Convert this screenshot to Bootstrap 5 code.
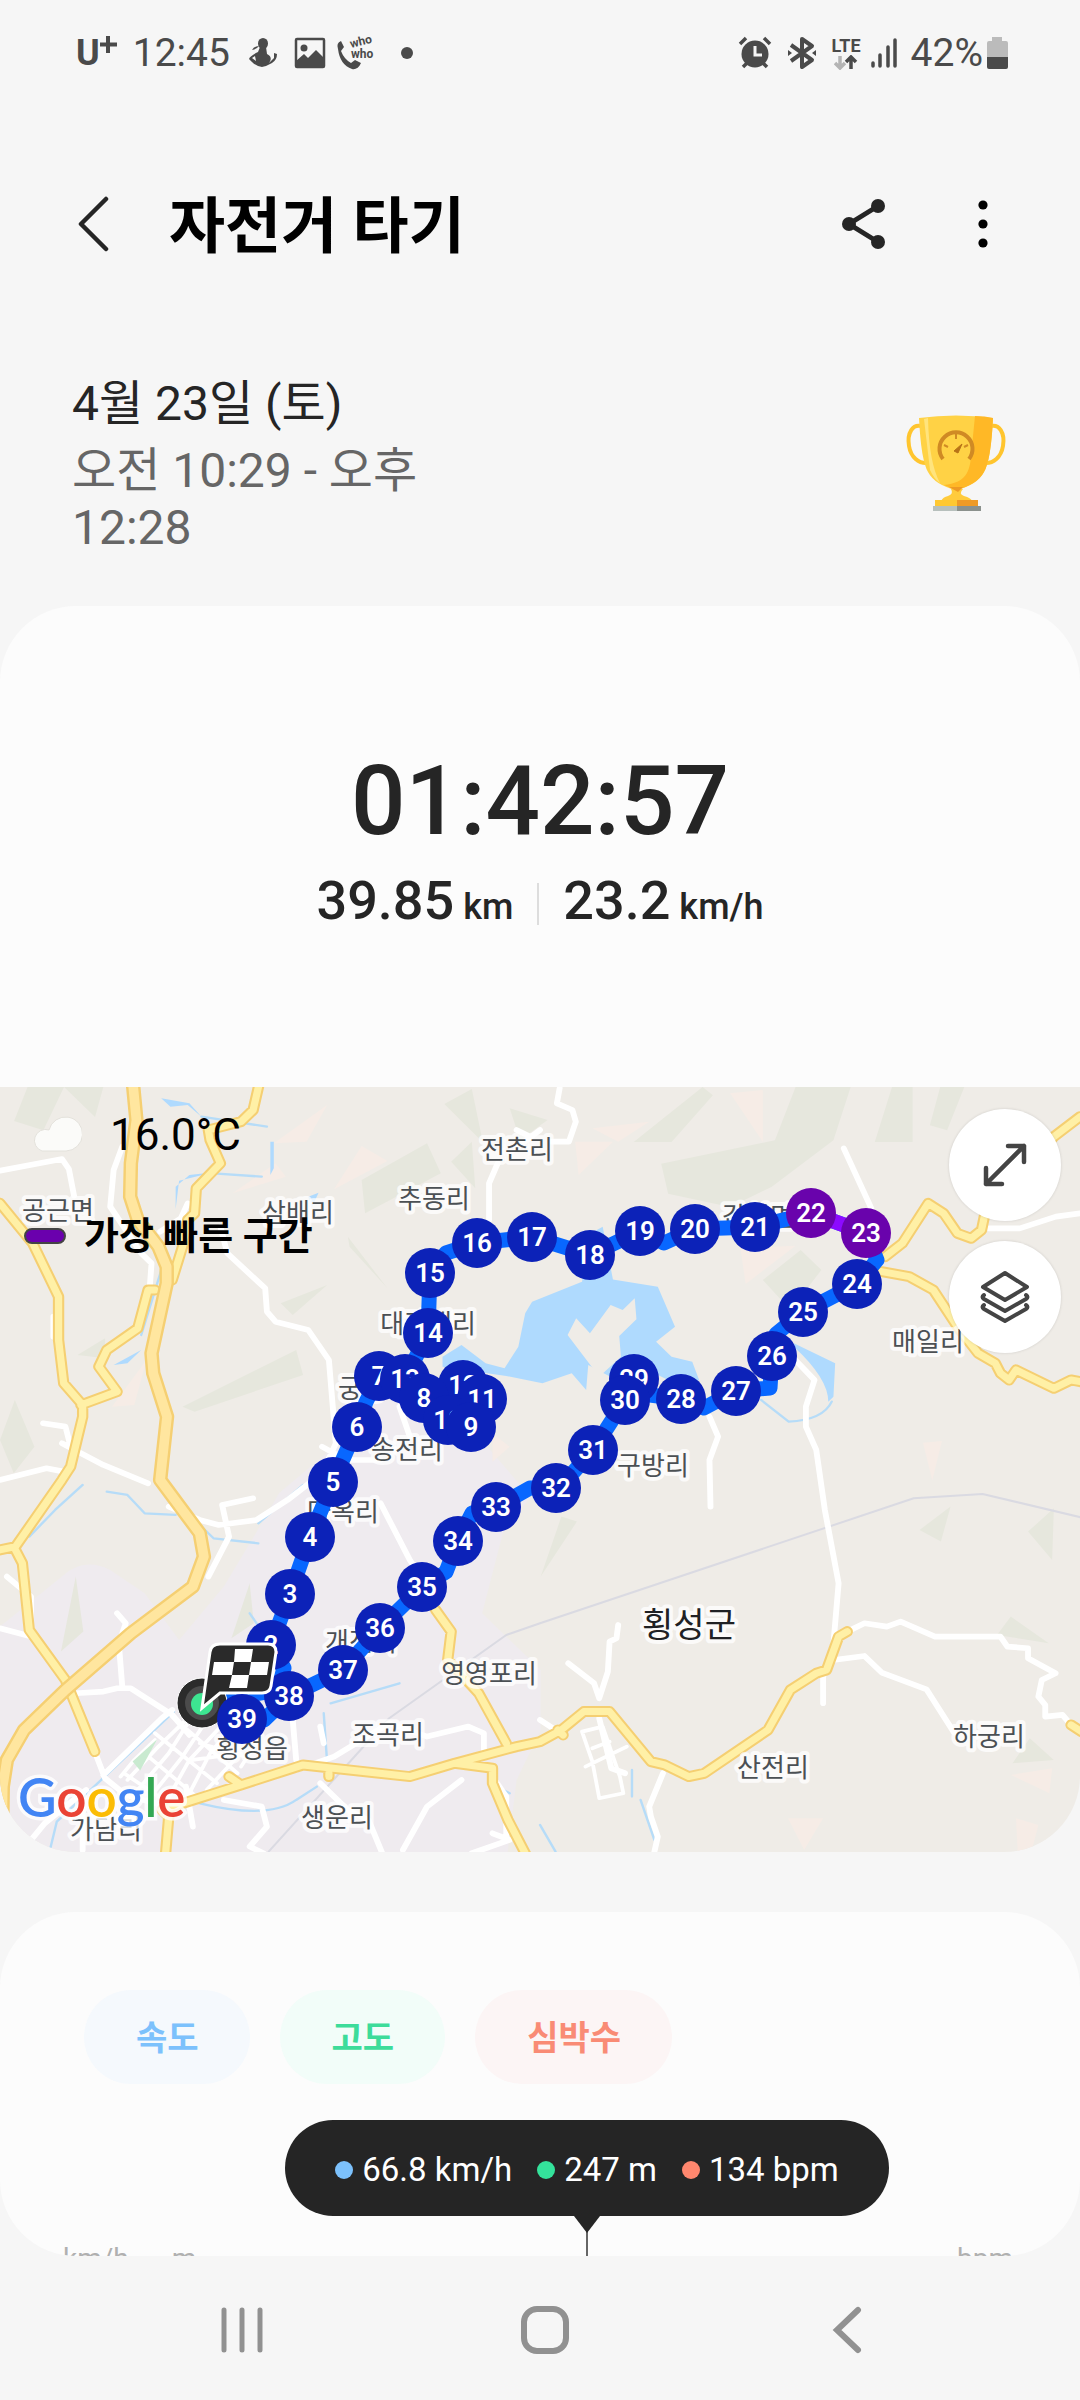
<!DOCTYPE html>
<html lang="ko">
<head>
<meta charset="utf-8">
<meta name="viewport" content="width=device-width, initial-scale=1">
<title>자전거 타기</title>
<link href="https://cdn.jsdelivr.net/npm/bootstrap@5.3.0/dist/css/bootstrap.min.css" rel="stylesheet">
<style>
body{background:#f6f6f6;color:#252525;font-family:Roboto,"Noto Sans CJK KR",sans-serif}
svg{display:block;flex:none}
.status-bar{height:104px;padding:2px 72px 0 76px;color:#4a4a4a;font-size:39px;line-height:48px}
.carrier{font-size:36px;line-height:36px}
.lte{font-size:18px;line-height:18px}
.app-bar{height:240px;padding:0 75px}
.app-title{font-size:61px;line-height:72px;color:#000;padding:6px 0 0 60px;font-weight:600}
.plain-btn{background:none;border:0;padding:0;color:#252525}
.when{padding:30px 72px 0;height:262px}
.when-text{width:400px;font-size:48px;line-height:57px}
.when-date{line-height:60px;margin-bottom:8px}
.muted-time{color:#666}
.trophy{margin-top:40px}
.panel{background:#fcfcfc}
.summary{border-radius:76px 76px 0 0;height:481px;padding-top:139px;font-weight:500}
.duration{font-size:96px;line-height:112px}
.stat-row{margin-top:12px}
.stat-num{font-size:54px;line-height:64px}
.stat-unit{font-size:36px;white-space:pre}
.stat-rule{width:2px;height:42px;background:#ddd}
.route-map{border-radius:0 0 76px 76px;overflow:hidden;background:#efece7}
.map-name{font-size:26px;fill:#4b5054;text-anchor:middle;stroke:#fff;stroke-opacity:.75;stroke-width:8px;stroke-linejoin:round;paint-order:stroke}
.map-city{font-size:34px;fill:#202124}
.pins text{font-size:26px;font-weight:600;fill:#fff;text-anchor:middle}
.logo-text{font-family:Lato,sans-serif;font-size:53px;font-weight:600;stroke:#fff;stroke-opacity:.8;stroke-width:7px;paint-order:stroke}
.map-legend{top:20px;left:24px;color:#000}
.temp{font-size:44px;line-height:56px}
.fastest{font-size:38px;line-height:48px;margin-top:49px;gap:18px;font-weight:600}
.swatch{width:42px;height:16px;border-radius:8px;border:2px solid #444;background:#6a00ad}
.map-tools{top:22px;right:19px;gap:20px}
.round-btn{width:112px;height:112px;border:0;border-radius:50%;background:#fff;color:#444;box-shadow:0 0 3px #0002}
.chart-card{border-radius:76px 76px 0 0;margin-top:60px;padding-top:78px;height:460px}
.chips{padding-left:84px;gap:30px}
.chip{height:94px;padding:2px 51px 0 52px;border:0;border-radius:47px;font-size:34px;font-weight:600}
.chip-speed{color:#7cc1fc;background:#f5f9fd}
.chip-alt{color:#3ddc9a;background:#f2fdf9}
.chip-heart{color:#f98b75;background:#fcf5f5}
.chart-tip{width:604px;height:96px;margin:36px auto 0 285px;padding-top:3px;border-radius:48px;background:#252525;color:#fff;font-size:33px;line-height:40px;gap:25px}
.chart-tip i{width:18px;height:18px;border-radius:50%;margin-right:9px}
.dot-speed{background:#7cc1fc}.dot-alt{background:#34e29b}.dot-heart{background:#ff876e}
.cursor-line{margin-left:574px}
.axis-row{font-size:28px;line-height:34px;color:#b0b0b0;margin-top:-18px;padding:0 67px 0 63px;gap:43px}
.scroll-area{min-height:0;border-radius:0 0 76px 76px}
.sys-nav{height:144px;color:#919191;padding:4px 208px 0 217px}
</style>
<script src="https://cdn.jsdelivr.net/npm/bootstrap@5.3.0/dist/js/bootstrap.bundle.min.js"></script>
</head>
<body class="vh-100 d-flex flex-column overflow-hidden">
<main class="scroll-area flex-grow-1 overflow-hidden">
  <div class="status-bar d-flex align-items-center justify-content-between">
    <div class="d-flex align-items-center">
      <span class="carrier fw-bold">U</span>
      <svg width="17" height="34" viewBox="0 0 17 34"><path d="M8 0v17M0 8.500h17" stroke="#4a4a4a" stroke-width="4"/></svg>
      <span class="ms-3">12:45</span>
      <svg class="ms-3" width="32" height="32" viewBox="0 0 32 32" fill="#4a4a4a"><ellipse cx="17" cy="6.500" rx="5" ry="5.500"/><path d="M14 10h6l1 7c4 2 5 5 2 9l5-5v-5l3 1q0 6-5 9t-10 4q-6-1-10-5l-3-3q1-3 9-7zM9 19l-3 2 4 3z" fill-rule="evenodd"/><path d="M6 13q2-4 7-4-2 3-7 4z"/></svg>
      <svg class="ms-3" width="32" height="32" viewBox="0 0 32 32"><rect x="2" y="2" width="28" height="28" rx="1" fill="none" stroke="#4a4a4a" stroke-width="2.500"/><circle cx="10" cy="11" r="3.500" fill="#4a4a4a"/><path d="M2 24l8-7 4 4 8-8 8 8v9H2z" fill="#4a4a4a"/></svg>
      <svg class="ms-2" width="42" height="34" viewBox="0 0 42 34" fill="#4a4a4a"><path d="M7 5l3 6-3 4q3 8 10 12l4-3 6 3c-2 5-6 7-9 6Q6 29 4 13 2 7 7 5z"/><g font-size="12" font-weight="700"><text x="17" y="12" transform="rotate(-14 17 12)">who</text><text x="17" y="22">who</text></g></svg>
      <svg class="ms-3" width="26" height="14" viewBox="0 0 26 14"><circle cx="15" cy="7" r="6" fill="#4a4a4a"/></svg>
    </div>
    <div class="d-flex align-items-center">
      <svg width="34" height="34" viewBox="0 0 34 34" stroke="#4a4a4a"><path d="M2 8l6-6M32 8l-6-6M5 31l4-4M29 31l-4-4" stroke-width="3.500"/><circle cx="17" cy="18" r="13.500" fill="#4a4a4a" stroke="none"/><path d="M17 10v9h7" fill="none" stroke="#f6f6f6" stroke-width="3"/></svg>
      <svg class="ms-3" width="28" height="34" viewBox="0 0 28 34"><path d="M3 9l21 15-10 7V3l10 7L3 25" fill="none" stroke="#4a4a4a" stroke-width="4" stroke-linejoin="round"/><path d="M0 14l4 3-4 3zM28 14l-4 3 4 3z" fill="#4a4a4a"/></svg>
      <div class="d-flex flex-column align-items-center ms-3"><span class="lte fw-bold">LTE</span><svg width="24" height="15" viewBox="0 0 24 15" fill="none" stroke-width="3.500"><path d="M6 1v11M1 8l5 5 5-5" stroke="#b4b4b4"/><path d="M17 14V3M12 7l5-5 5 5" stroke="#4a4a4a"/></svg></div>
      <svg class="ms-2" width="30" height="32" viewBox="0 0 30 32" stroke="#4a4a4a" stroke-width="3.500" stroke-linecap="round"><path d="M4 26v3M11 18v11M19 10v19M26 3v26"/></svg>
      <span class="ms-2 ps-1">42%</span>
      <svg class="ms-1" width="21" height="32" viewBox="0 0 21 32"><path d="M5 0h10v4h4q2 0 2 2v14H0V6q0-2 2-2h3z" fill="#bbb"/><path d="M0 20h21v10q0 2-2 2H2q-2 0-2-2z" fill="#4a4a4a"/></svg>
    </div>
  </div>

  <header class="app-bar d-flex align-items-center">
    <a href="#" class="plain-btn" aria-label="뒤로"><svg width="34" height="56" viewBox="0 0 34 56"><path d="M31 3L6 28l25 25" fill="none" stroke="#252525" stroke-width="4.500" stroke-linecap="round" stroke-linejoin="round"/></svg></a>
    <h1 class="app-title mb-0 me-auto">자전거 타기</h1>
    <button class="plain-btn me-5" type="button" aria-label="공유"><svg width="52" height="56" viewBox="0 0 52 56" fill="#252525"><path d="M41 10L12 28l29 18" fill="none" stroke="#252525" stroke-width="5"/><circle cx="41" cy="10" r="7"/><circle cx="12" cy="28" r="7"/><circle cx="41" cy="46" r="7"/></svg></button>
    <button class="plain-btn ms-4" type="button" aria-label="더보기"><svg width="44" height="56" viewBox="0 0 44 56"><g fill="#000"><circle cx="22" cy="9" r="4.600"/><circle cx="22" cy="28" r="4.600"/><circle cx="22" cy="47" r="4.600"/></g></svg></button>
  </header>

  <section class="when d-flex justify-content-between align-items-start">
    <div class="when-text">
      <div class="when-date">4월 23일 (토)</div>
      <div class="muted-time">오전 10:29 - 오후 12:28</div>
    </div>
    <svg class="trophy" width="104" height="98" viewBox="0 0 104 98">
      <path d="M20 13C8 8 3 20 5 32s10 17 17 17M84 13c12-5 17 7 15 19S89 49 82 49" fill="none" stroke="#ffc52e" stroke-width="4"/>
      <path d="M15 4q37-5 74 0-2 42-9 54-7 13-28 18-21-5-28-18Q17 46 15 4z" fill="#ffd245"/>
      <path d="M71 2q10 0 18 2-2 42-9 54-7 13-28 18l-12-5c22-2 26-14 27-29z" fill="#ffb826"/>
      <path d="M20 5l6 51q4 9 10 13-11-20-12-65z" fill="#ffe47d"/>
      <path d="M39 45a16.500 16.500 0 1 1 26 0" fill="none" stroke="#d08a24" stroke-width="4"/>
      <path d="M52 20v5M40 31l4 2M64 31l-4 2" stroke="#d08a24" stroke-width="2"/><path d="M58 30l-4 9-4-2z" fill="#b87317" stroke="#b87317" stroke-width="1"/>
      <path d="M47 75h12q-5 5 1 7 7 2 8 5H37q2-4 7-5 6-2 3-7z" fill="#ffcb3c"/><path d="M45 73h14l-5 5z" fill="#ee9a24"/>
      <path d="M31 86h22v6H31z" fill="#ffc832"/><path d="M53 86h21v6H53z" fill="#ef9a26"/>
      <path d="M29 92h24v5H29z" fill="#b7c0bd"/><path d="M53 92h24v5H53z" fill="#8b918d"/>
    </svg>
  </section>

  <section class="panel summary text-center">
    <div class="duration">01:42:57</div>
    <div class="stat-row d-flex justify-content-center align-items-center">
      <div class="stat-num">39.85<span class="stat-unit"> km</span></div>
      <div class="stat-rule mx-4"></div>
      <div class="stat-num">23.2<span class="stat-unit"> km/h</span></div>
    </div>
  </section>

  <section class="route-map position-relative">
    <svg class="w-100 h-auto" viewBox="0 1087 1080 765" role="img" aria-label="경로 지도">
      <g transform="translate(0 1080) scale(.3444 .3333)" fill="none" stroke-linejoin="round" stroke-linecap="round">
        <!-- built-up area -->
        <path fill="#efebef" d="M0 2400V1640l180-150q60-60 140-20l100 70 100 140 130-160 110-190 50-90 160-140 40-200 60-80 130 60 60 130 130 60 150 180-80 110-60 240 170 170v180l-70 150-60 500z"/>
        <!-- woodland -->
        <g fill="#e6e7dd"><path d="M80 21h220l-24 90-90-90-60 130-85-28zM1290 72l80-45 32 160zM1480 85l110 35-80 60zM1050 300l190-110 40 90-220 120zM1310 245l60-60 10 140zM1010 470l115 155-110-125zM815 670l135-55-100 90zM530 980l330-170 20 75-315 110zM225 825l80-50v60zM0 1080l43-120 57 140-60 80zM2040 21l30 25-120 140h-110zM2310 21h160l-50 160-180 140-120 60-180-40-20-90 330-70zM2590 21h60v165h-110zM2730 21h70l-50 130-50-15zM2215 600l110-90 60 60-90 120zM2670 1350l90-70-28 105zM2985 1355l75-70-5 155zM2895 1665l40-55 110 80zM2940 2050l50-75 70 65zM1630 1310l45 15-105 165zM220 1490l22 165-65 60zM725 1510l12 120-65 45z"/></g>
        <g fill="#f6ece6"><path d="M950 75l-60 110-95 5zM1050 198l75 45-155 85zM800 250l30 40-155 50zM1670 185h110l-100 100zM1720 145l165-20-90 60zM2120 40l95-10v155zM2150 505l160-8-145 115zM2680 1088l55-5-28 118zM2935 2085l120-20-8 75zM2288 2215h102l-55 95zM2950 2215l65 20-20 80h-40zM325 980l100-140-35 135zM1430 1060l50 40-50 45z"/></g>
        <!-- water -->
        <g fill="#afdafe"><path d="M1285 860v-30l55-35 70 55 55 15 40-65 20-100 20-35 145-60 25-145 15 130 180 30 50 120-55 45 45 45 60 15 20 55-50 20-80-40-110 20-82-45-6 75-42-50-85 30-105-22z"/><path d="M1680 480l70-40 30 160-50 20zM2305 790l120 60-5 100-15 15q0-70-100-165zM468 55l82 15 35 40-40-35-50 5zM510 320l40-35 70-8-100 25-10 85zM785 185h10v80l-10 20zM330 855l80-45-40 40zM895 350l30-12-20 45z"/></g>
        <path fill="#efece7" d="M1673 715l40 45 60-85 35 15 35-35 5 63-50 50 5 62-63 60-92-125z"/>
        <g stroke="#b6dcf8" stroke-width="7"><path d="M2210 960l80 65q100-5 125-60M585 110l190 30M620 280l140 10M310 1235l60 10 50 55 90 5M880 1215l-130 115M590 1345l30 30 130 15M240 1215l-80 75-75 80M470 565l-60 200M725 1600l40 60M505 1895l-340 330-20 85M1160 1810l-200 60M940 1900l10 150M580 2170q200 50 280-10l60-40M1440 2060v60l40 20M1568 2235l45 80M1835 2070v80M1860 2160l40 120"/></g>
        <g stroke="#dadae2" stroke-width="6"><path d="M780 2315l350-400 340-250 98-35 1085-375 200-13 285 70"/></g>
        <!-- local roads -->
        <g stroke="#fff" stroke-width="17"><path d="M0 272l180-35 20 30 15 80M355 200l-25 70-10 110 90 140 30 30-5 70M415 30M545 370l-20 45-60 40M640 440l20 80 110 105 5 70 25 30 95 25 60 90 20 250-40 90-100 80-90 60-110 15-55-15-90-40M935 1100l70 40h100M125 1030l65 10 15 60-25-10 120 65 130 55M0 1200l135-35 50 10M645 1275l20 95-60 120M645 1275l90-20M1105 1270l85 170 50 80M1445 250l-25 60v110M1568 150l-90 70M1625 25l-8 45 45 20 10 35-20 60h-50M1500 150l40 20M2450 205l80 180M3136 400l-70 10-105 35h-90M2300 830l65 70-25 80v60l30 70 25 180 40 220-15 180-30 100v80M2060 1010l25 60-25 70 3 140M2420 1740l90-12 50 50 130 50 80 130M2460 1655l50-25 65 10 40-15 100 45h190l20 30 60 5v30l80 45-40 20-10 50 20 25v35l50-5 25 30M1795 1635l-5 40-20 10-5 90-25 80-15-45-75-60M1740 1915l35 150 40 15M1925 2080l-40 100 5 30 20 60-10 46M0 1645l110 30M340 1600l25 30-20 60 10 130M220 1840l80-5 40-10h40l120 80 50 60M275 2015l30 80 60 50 140 40M20 1490l70 60v60M300 2085l90-90 80-80 30-25M250 2130l-120 100-40 50M240 2180v130M540 2120l20 120M650 2160l110 20 15 60-50 60 40 20M850 1920l10 120M930 1940l10 50M860 2070l110-40 160-100 110 40 120-30 45 20v50M930 2110l80 80 60 30 40 100M1340 2100l-100 80-70 130M1430 2260l50 20-110 40M1430 2090l40 60v120M1568 1920l60 40M1160 980l30 90M155 710v60"/></g>
        <path stroke="#fff" stroke-width="11" d="M370 2100l90-100 90-90M400 2130l90-110 80-130M430 2160l100-130 90-140M480 2170l70-130 100-110M360 2080l130 90M420 2020l150 130M450 1960l180 150M500 1910l190 170M540 2160l70-140 50-60M600 2130l90-100M560 2040l140-20M580 1990l130 40M700 2060l50-80M350 2090l40-50 60-60M1690 1955l60-15 50 150 10 50-70 15-20-110-30-90M1700 2060l120-60M1720 2005l50-20"/>
        <path stroke="none" fill="#c9ead0" d="M385 2045l72-68-50 95z"/>
        <!-- main roads -->
        <path stroke="#f5cf72" stroke-width="33" d="M755 0l-20 90-35 35-95 25 5 30 30 70-70 75-5 75-20 20-15 80-30 100M450 630h-20l-30 115-90 65-23 50 53 75-105 40M0 370l95 120 75 160v130l15 130 55 65v35l-35 150-25 40L45 1400l-45 10M45 1410l20 40 20 200 105 150 85 215M480 2330l10-120-20-20 230-75 180-60 310 35 130-40 180-50 68-15 62-35 65-55h75l120 150 40 10 70 35 45-10 185-130 65-120 75-50 30-10 35-100 25-15M1265 1590l45 65-10 85 90 100 80 150M1320 2050l110 15v45l45 110 60 120M2570 530l50-40 75-120 45 30 40 60 40 15 30-25 10-50 200-230 76-60M2560 575l80 15 70 40 70 110 60 80 50 30 15 30 25 20 20-30 110 55 50-25 26 5M3110 1935l30 20M665 2090l35 25M955 2080v10M1620 1950l15 15"/>
        <path stroke="#fff0a6" stroke-width="21" d="M755 0l-20 90-35 35-95 25 5 30 30 70-70 75-5 75-20 20-15 80-30 100M450 630h-20l-30 115-90 65-23 50 53 75-105 40M0 370l95 120 75 160v130l15 130 55 65v35l-35 150-25 40L45 1400l-45 10M45 1410l20 40 20 200 105 150 85 215M480 2330l10-120-20-20 230-75 180-60 310 35 130-40 180-50 68-15 62-35 65-55h75l120 150 40 10 70 35 45-10 185-130 65-120 75-50 30-10 35-100 25-15M1265 1590l45 65-10 85 90 100 80 150M1320 2050l110 15v45l45 110 60 120M2570 530l50-40 75-120 45 30 40 60 40 15 30-25 10-50 200-230 76-60M2560 575l80 15 70 40 70 110 60 80 50 30 15 30 25 20 20-30 110 55 50-25 26 5M3110 1935l30 20M665 2090l35 25M955 2080v10M1620 1950l15 15"/>
        <path stroke="#f5cf72" stroke-width="42" d="M385 0l11 120-16 130-2 100 22 70 60 80 24 60v50l-44 210 5 60 40 130-20 190 115 160 12 70-32 90-180 140-190 170-120 120-50 90-12 80-3 210"/>
        <path stroke="#ffe69f" stroke-width="28" d="M385 0l11 120-16 130-2 100 22 70 60 80 24 60v50l-44 210 5 60 40 130-20 190 115 160 12 70-32 90-180 140-190 170-120 120-50 90-12 80-3 210"/>
      </g>
      <g>
        <g class="map-name">
          <text x="58" y="1220">공근면</text><text x="517" y="1159">전촌리</text><text x="434" y="1208">추동리</text><text x="298" y="1222">삼배리</text>
          <text x="428" y="1333">대관대리</text><text x="374" y="1398">궁종리</text><text x="407" y="1459">송전리</text><text x="343" y="1521">마옥리</text>
          <text x="361" y="1651">개전리</text><text x="489" y="1683">영영포리</text><text x="388" y="1744">조곡리</text><text x="252" y="1758">횡성읍</text>
          <text x="337" y="1827">생운리</text><text x="106" y="1839">가담리</text><text x="758" y="1226">갑천면</text><text x="928" y="1351">매일리</text>
          <text x="653" y="1475">구방리</text><text x="773" y="1777">산전리</text><text x="989" y="1746">하궁리</text>
        </g>
        <text class="map-name map-city" x="689" y="1637">횡성군</text>
      </g>
      <g fill="none" stroke="#0867ff" stroke-width="15" stroke-linejoin="round" stroke-linecap="round">
        <path d="M202 1703L278 1690L284 1668L271 1645L290 1594L310 1537L333 1482L357 1427L366 1402L379 1376L424 1398L448 1420L471 1427L482 1399L463 1385L424 1398L405 1379L428 1333L430 1273L446 1253L477 1243L532 1237L590 1255L640 1231L664 1243L695 1229L755 1227L811 1213L866 1233L877 1260L857 1284L803 1312L776 1334L772 1356L770 1388L736 1391L704 1408L681 1399L650 1395L634 1379L625 1400L593 1450L570 1476L556 1488L530 1488L496 1507L472 1513L458 1541L446 1572L422 1587L380 1628L343 1670L289 1696L264 1720L242 1719"/>
        <path stroke="#8c0aff" d="M811 1213L866 1233"/>
      </g>
      <defs><circle id="km" r="25" fill="#0c22b8"/><circle id="fast" r="25" fill="#6903ac"/></defs>
      <g class="pins">
        <use href="#fast" x="811" y="1213"/><text x="811" y="1222">22</text>
        <use href="#km" x="755" y="1227"/><text x="755" y="1236">21</text>
        <use href="#km" x="695" y="1229"/><text x="695" y="1238">20</text>
        <use href="#km" x="640" y="1231"/><text x="640" y="1240">19</text>
        <use href="#fast" x="866" y="1233"/><text x="866" y="1242">23</text>
        <use href="#km" x="532" y="1237"/><text x="532" y="1246">17</text>
        <use href="#km" x="477" y="1243"/><text x="477" y="1252">16</text>
        <use href="#km" x="590" y="1255"/><text x="590" y="1264">18</text>
        <use href="#km" x="430" y="1273"/><text x="430" y="1282">15</text>
        <use href="#km" x="857" y="1284"/><text x="857" y="1293">24</text>
        <use href="#km" x="803" y="1312"/><text x="803" y="1321">25</text>
        <use href="#km" x="428" y="1333"/><text x="428" y="1342">14</text>
        <use href="#km" x="772" y="1356"/><text x="772" y="1365">26</text>
        <use href="#km" x="379" y="1376"/><text x="379" y="1385">7</text>
        <use href="#km" x="405" y="1379"/><text x="405" y="1388">13</text>
        <use href="#km" x="634" y="1379"/><text x="634" y="1388">29</text>
        <use href="#km" x="463" y="1385"/><text x="463" y="1394">12</text>
        <use href="#km" x="736" y="1391"/><text x="736" y="1400">27</text>
        <use href="#km" x="424" y="1398"/><text x="424" y="1407">8</text>
        <use href="#km" x="482" y="1399"/><text x="482" y="1408">11</text>
        <use href="#km" x="681" y="1399"/><text x="681" y="1408">28</text>
        <use href="#km" x="625" y="1400"/><text x="625" y="1409">30</text>
        <use href="#km" x="448" y="1420"/><text x="448" y="1429">10</text>
        <use href="#km" x="471" y="1427"/><text x="471" y="1436">9</text>
        <use href="#km" x="357" y="1427"/><text x="357" y="1436">6</text>
        <use href="#km" x="593" y="1450"/><text x="593" y="1459">31</text>
        <use href="#km" x="333" y="1482"/><text x="333" y="1491">5</text>
        <use href="#km" x="556" y="1488"/><text x="556" y="1497">32</text>
        <use href="#km" x="496" y="1507"/><text x="496" y="1516">33</text>
        <use href="#km" x="310" y="1537"/><text x="310" y="1546">4</text>
        <use href="#km" x="458" y="1541"/><text x="458" y="1550">34</text>
        <use href="#km" x="422" y="1587"/><text x="422" y="1596">35</text>
        <use href="#km" x="290" y="1594"/><text x="290" y="1603">3</text>
        <use href="#km" x="380" y="1628"/><text x="380" y="1637">36</text>
        <use href="#km" x="271" y="1645"/><text x="271" y="1654">2</text>
        <use href="#km" x="343" y="1670"/><text x="343" y="1679">37</text>
        <use href="#km" x="289" y="1696"/><text x="289" y="1705">38</text>
        <circle cx="202" cy="1703" r="25" fill="#2b2b2b" stroke="#fff" stroke-width="1"/><circle cx="202" cy="1703" r="17" fill="#4b4b4b"/><circle cx="202" cy="1704" r="11" fill="#3de591"/>
        <path d="M220 1644h48q8 0 8 8l-5 34q-1 7-9 7h-42l-18 15 8-56q1-8 10-8z" fill="#2a2a2a" stroke="#fff" stroke-width="3"/>
        <path d="M235 1649h18l-2 13h-17zM214 1662h20l-2 13h-20zM251 1662h18l-2 13h-18zM232 1675h17l-2 13h-18z" fill="#fff"/>
        <use href="#km" x="242" y="1719"/><text x="242" y="1728">39</text>
      </g>
      <text class="logo-text" x="18" y="1817"><tspan fill="#4285f4">G</tspan><tspan fill="#ea4335">o</tspan><tspan fill="#fbbc05">o</tspan><tspan fill="#4285f4">g</tspan><tspan fill="#34a853">l</tspan><tspan fill="#ea4335">e</tspan></text>
    </svg>
    <div class="map-legend position-absolute">
      <div class="d-flex align-items-center temp">
        <svg class="ms-1 me-4" width="54" height="40" viewBox="0 0 54 40"><path d="M14 36a11 11 0 1 1 7-21 17 17 0 1 1 17 21z" fill="#fbfbf9" stroke="#e3e1db"/></svg>
        <span class="ms-1">16.0°C</span>
      </div>
      <div class="d-flex align-items-center fastest"><span class="swatch"></span>가장 빠른 구간</div>
    </div>
    <div class="map-tools position-absolute d-flex flex-column">
      <button class="round-btn d-flex align-items-center justify-content-center" type="button" aria-label="지도 확대"><svg width="48" height="48" viewBox="0 0 48 48" fill="none" stroke="#444" stroke-width="4.500" stroke-linecap="round" stroke-linejoin="round"><path d="M5 43L43 5M27 5h16v16M5 27v16h16"/></svg></button>
      <button class="round-btn d-flex align-items-center justify-content-center" type="button" aria-label="지도 유형"><svg width="52" height="54" viewBox="0 0 52 54" fill="none" stroke="#444" stroke-width="4" stroke-linecap="round" stroke-linejoin="round"><path d="M26 3l22 14-22 13L4 17zM5 25q-3 2 0 4l21 12 21-12q3-2 0-4M5 35q-3 2 0 4l21 12 21-12q3-2 0-4"/></svg></button>
    </div>
  </section>

  <section class="panel chart-card">
    <div class="chips d-flex">
      <button class="chip chip-speed" type="button">속도</button>
      <button class="chip chip-alt" type="button">고도</button>
      <button class="chip chip-heart" type="button">심박수</button>
    </div>
    <div class="chart-tip d-flex align-items-center justify-content-center">
      <span class="d-flex align-items-center"><i class="dot-speed"></i>66.8 km/h</span>
      <span class="d-flex align-items-center"><i class="dot-alt"></i>247 m</span>
      <span class="d-flex align-items-center"><i class="dot-heart"></i>134 bpm</span>
    </div>
    <svg class="cursor-line" width="26" height="44" viewBox="0 0 26 44"><path d="M13 10v34" stroke="#666" stroke-width="2"/><path d="M0 0h26L13 17z" fill="#252525"/></svg>
    <div class="axis-row d-flex"><span>km/h</span><span>m</span><span class="ms-auto">bpm</span></div>
  </section>
</main>
<nav class="sys-nav d-flex flex-shrink-0 align-items-center justify-content-between">
  <button class="plain-btn" type="button" aria-label="최근 앱"><svg width="50" height="48" viewBox="0 0 50 48" stroke="#919191" stroke-width="5" stroke-linecap="round"><path d="M7 4v40M25 4v40M43 4v40"/></svg></button>
  <button class="plain-btn" type="button" aria-label="홈"><svg width="50" height="50" viewBox="0 0 50 50"><rect x="4" y="4" width="42" height="42" rx="13" fill="none" stroke="#919191" stroke-width="6"/></svg></button>
  <button class="plain-btn" type="button" aria-label="뒤로"><svg width="50" height="48" viewBox="0 0 50 48"><path d="M36 4L15 24l21 20" fill="none" stroke="#919191" stroke-width="6" stroke-linecap="round"/></svg></button>
</nav>
</body>
</html>
